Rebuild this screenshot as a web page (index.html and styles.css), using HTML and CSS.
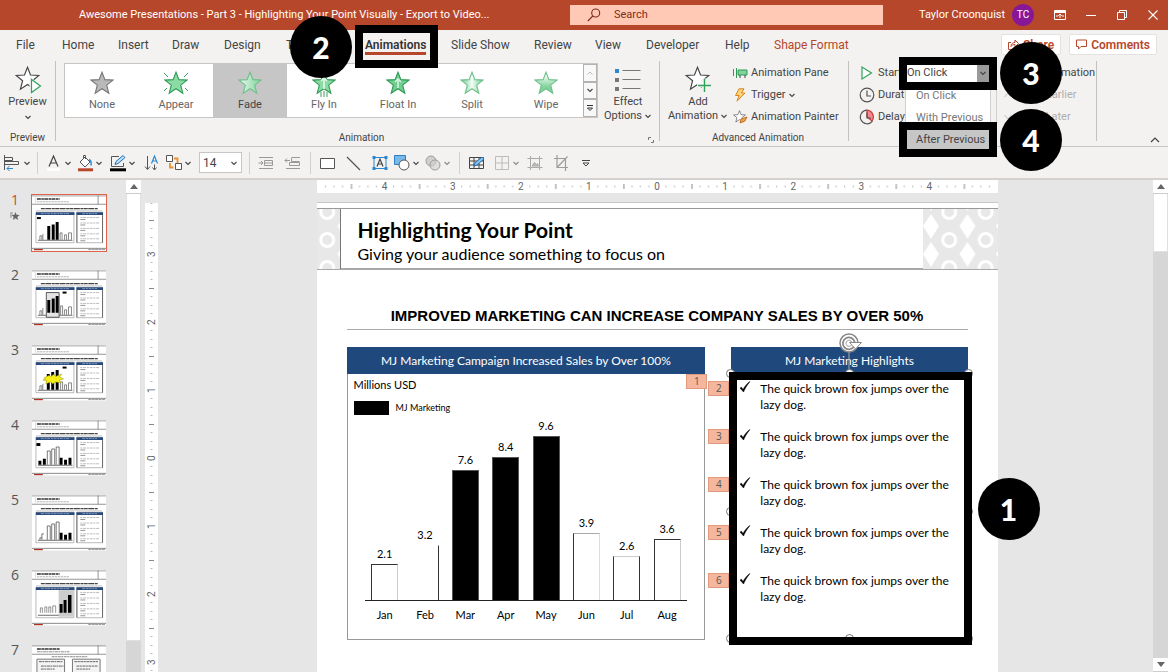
FILE: index.html
```html
<!DOCTYPE html>
<html lang="en">
<head>
<meta charset="utf-8">
<title>Awesome Presentations</title>
<link rel="stylesheet" href="styles.css">
</head>
<body>
<svg class="defs" aria-hidden="true">
  <defs>
    <linearGradient id="fadeFill"><stop offset="0" stop-color="#eafaef"/><stop offset="1" stop-color="#7fd39b"/></linearGradient>
    <linearGradient id="splitFill"><stop offset="0" stop-color="#6fce90"/><stop offset=".5" stop-color="#f4fcf6"/><stop offset="1" stop-color="#6fce90"/></linearGradient>
    <linearGradient id="wipeFill" x2="0" y2="1"><stop offset="0.15" stop-color="#f4fcf6"/><stop offset=".7" stop-color="#7fd39b"/></linearGradient>
    <symbol id="star" viewBox="0 0 24 24"><path d="M12 1.2l2.9 7.4 8 .5-6.2 5 2.1 8.1-6.8-4.5-6.8 4.5 2.1-8.1-6.2-5 8-.5z" stroke-width="1.1"/></symbol>
    <symbol id="chev" viewBox="0 0 8 8"><path d="M1.5 3L4 5.5 6.500 3" fill="none" stroke="#444" stroke-width="1.1"/></symbol>
    <symbol id="slide" viewBox="0 0 75 56">
      <rect width="75" height="56" fill="#fff"/>
      <path d="M0 .5h75" stroke="#999"/><path d="M0 9h75M67 0v9" stroke="#666" stroke-width=".7"/><path d="M3.500 2v6" stroke="#bbb" stroke-width=".5"/>
      <path d="M5 3.700h23" stroke="#333" stroke-width="1.4" stroke-dasharray="4 .5 2.500 .4"/>
      <path d="M5 6.500h33" stroke="#aaa" stroke-width=".9" stroke-dasharray="2 .6 3 .5"/>
      <path d="M9 13.500h58" stroke="#444" stroke-width="1.3" stroke-dasharray="4 .5 6 .6 3 .4"/>
      <path d="M4 15.500h67" stroke="#999" stroke-width=".4"/>
      <path d="M4 17h38.500v31H4zM45.500 17h26v31h-26z" fill="none" stroke="#999" stroke-width=".7"/>
      <path d="M45.500 20v28M71.500 20v28" stroke="#555" stroke-width=".8"/>
      <path d="M4 18.500h39M45 18.500h27" stroke="#27487a" stroke-width="3"/>
      <path d="M9 18.500h29M51 18.500h15" stroke="#a9bbd8" stroke-width=".7" stroke-dasharray="3 .8 2 .6"/>
      <path d="M49 22.500h19M49 28h19M49 33.500h19M49 39h19M49 44h19" stroke="#aaa" stroke-width=".8" stroke-dasharray="2 .8 3 .8"/>
      <path d="M49 24.500h5M49 30h5M49 35.500h5M49 41h5M49 46h5" stroke="#888" stroke-width=".9"/>
      <path d="M6 45.500h35" stroke="#444" stroke-width=".8"/>
      <path d="M0 53.700h75" stroke="#555" stroke-width=".7"/><path d="M2 54.900h9" stroke="#b33020" stroke-width="1.2"/><path d="M57 54.900h17" stroke="#999" stroke-dasharray="3 .5"/>
    </symbol>
    <pattern id="motif" width="36.5" height="28" patternUnits="userSpaceOnUse" patternTransform="translate(8 3)">
      <rect width="37" height="28" fill="#e8e8e8"/>
      <path d="M0 2l8 12-8 13zM36.500 2l-8 12 8 13z" fill="#fff"/>
      <circle cx="18.2" cy="0" r="6.500" fill="none" stroke="#fff" stroke-width="3"/><circle cx="18.2" cy="28" r="6.500" fill="none" stroke="#fff" stroke-width="3"/>
    </pattern>
    <pattern id="motifLeft" width="36.5" height="28" patternUnits="userSpaceOnUse" patternTransform="translate(-8 3)">
      <rect width="37" height="28" fill="#e8e8e8"/>
      <path d="M0 2l8 12-8 13zM36.500 2l-8 12 8 13z" fill="#fff"/>
      <circle cx="18.2" cy="0" r="6.500" fill="none" stroke="#fff" stroke-width="3"/><circle cx="18.2" cy="28" r="6.500" fill="none" stroke="#fff" stroke-width="3"/>
    </pattern>
    <pattern id="ticksH" width="68.1" height="13" patternUnits="userSpaceOnUse">
      <path d="M8.500 5.500v2M17 5.500v2M25.500 5.500v2M42.500 5.500v2M51 5.500v2M59.500 5.500v2" stroke="#bbb"/><path d="M34.500 4v5" stroke="#888"/>
    </pattern>
    <pattern id="ticksV" width="13" height="68" patternUnits="userSpaceOnUse" y="-17">
      <path d="M5.500 8.500h2M5.500 17.500h2M5.500 25.500h2M5.500 42.500h2M5.500 51.500h2M5.500 59.500h2" stroke="#bbb"/><path d="M4 34.500h5" stroke="#888"/>
    </pattern>
  </defs>
</svg>

<header class="titlebar">
  <h1 class="doc-title">Awesome Presentations - Part 3 - Highlighting Your Point Visually - Export to Video...</h1>
  <label class="search">
    <svg width="14" height="14" viewBox="0 0 14 14" fill="none" stroke="#7d2c1a" stroke-width="1.1"><circle cx="8.700" cy="5" r="4"/><path d="M5.800 8L.8 13"/></svg>
    <input type="text" placeholder="Search" aria-label="Search">
  </label>
  <div class="account">
    <span>Taylor Croonquist</span><span class="avatar">TC</span>
  </div>
  <div class="window-buttons">
    <button aria-label="Ribbon display options"><svg width="12" height="10" viewBox="0 0 12 10"><path d="M.5.500h11v9H.500z" fill="none" stroke="#fff"/><path d="M.5 2h11" stroke="#fff" stroke-width="2"/><path d="M6 8V4M4.300 5.700L6 4l1.700 1.700M2 6h2M8 6h2" fill="none" stroke="#fff"/></svg></button>
    <button aria-label="Minimize"><svg width="10" height="10" viewBox="0 0 10 10"><path d="M0 5.500h10" stroke="#fff"/></svg></button>
    <button aria-label="Restore"><svg width="10" height="10" viewBox="0 0 10 10" fill="none" stroke="#fff"><path d="M.5 2.500h7v7h-7zM2.500 2.500v-2h7v7h-2"/></svg></button>
    <button aria-label="Close"><svg width="10" height="10" viewBox="0 0 10 10"><path d="M.5.500l9 9M9.500.500l-9 9" stroke="#fff" stroke-width="1.1"/></svg></button>
  </div>
</header>

<nav class="tabs">
  <div class="tab-list">
    <button>File</button><button>Home</button><button>Insert</button><button>Draw</button><button>Design</button><button>Transitions</button>
    <div class="active-tab"><button>Animations</button><span class="frame frame-tab"></span><span class="step step-2">2</span></div>
    <button>Slide Show</button><button>Review</button><button>View</button><button>Developer</button><button>Help</button><button class="contextual">Shape Format</button>
  </div>
  <div class="tab-actions">
    <button><svg width="11" height="11" viewBox="0 0 11 11" fill="none" stroke="#b7472a"><path d="M3 3.500H.5v7h8V7M3 7.500c0-3 2-4 4-4V1l3.500 3.500L7 8V5.500c-2 0-3 .5-4 2z"/></svg>Share</button>
    <button><svg width="11" height="11" viewBox="0 0 11 11" fill="none" stroke="#b7472a"><path d="M.5 1h10v6.500H5L2.500 10V7.500h-2z"/></svg>Comments</button>
  </div>
</nav>

<section class="ribbon">
  <div class="group group-preview">
    <div class="group-body">
      <button class="big"><svg width="30" height="30" viewBox="0 0 30 30"><use href="#star" x="2" y="1" width="25" height="25" fill="#fff" stroke="#444"/><path d="M18 14.500v14l9.500-7z" fill="#f3f2f1" stroke="#f3f2f1" stroke-width="3"/><path d="M18.500 14.500v13l9-6.500z" fill="#fff" stroke="#2fa35b" stroke-width="1.2"/></svg>
      <span>Preview</span><svg class="chev" width="8" height="8"><use href="#chev"/></svg></button>
    </div>
    <div class="group-label">Preview</div>
  </div>

  <div class="group group-animation">
    <div class="group-body">
      <div class="gallery">
        <button><svg width="26" height="28" viewBox="0 0 26 28"><use href="#star" x="1" y="2" width="24" height="24" fill="#b9b9b9" stroke="#777"/></svg>None</button>
        <button><svg width="26" height="28" viewBox="0 0 26 28"><use href="#star" x="1" y="2" width="24" height="24" fill="#8bdba4" stroke="#2e9a55"/><path d="M1 4l4 4M25 4l-4 4M1 22l3-3M25 22l-3-3" stroke="#3d9d5f"/></svg>Appear</button>
        <button class="selected"><svg width="26" height="28" viewBox="0 0 26 28"><use href="#star" x="1" y="2" width="24" height="24" fill="url(#fadeFill)" stroke="#6fbf8b"/></svg>Fade</button>
        <button><svg width="26" height="28" viewBox="0 0 26 28"><use href="#star" x="1" y="2" width="24" height="24" fill="#8bdba4" stroke="#2e9a55"/><path d="M13 20V9M10 12l3-3 3 3" fill="none" stroke="#e6f8ec" stroke-width="1.600"/><path d="M10 23v5M13 22v6M16 23v5" stroke="#3d9d5f"/></svg>Fly In</button>
        <button><svg width="26" height="28" viewBox="0 0 26 28"><use href="#star" x="1" y="2" width="24" height="24" fill="#6fce90" stroke="#2e9a55"/><path d="M13 19V10M10 13l3-3 3 3" fill="none" stroke="#d3f2dc" stroke-width="1.600"/></svg>Float In</button>
        <button><svg width="26" height="28" viewBox="0 0 26 28"><use href="#star" x="1" y="2" width="24" height="24" fill="url(#splitFill)" stroke="#6fbf8b"/></svg>Split</button>
        <button><svg width="26" height="28" viewBox="0 0 26 28"><use href="#star" x="1" y="2" width="24" height="24" fill="url(#wipeFill)" stroke="#6fbf8b"/></svg>Wipe</button>
        <div class="gallery-scroll">
          <button aria-label="Row up"><svg width="8" height="8" viewBox="0 0 8 8"><path d="M1.500 5.500L4 3l2.500 2.500" fill="none" stroke="#bbb"/></svg></button>
          <button aria-label="Row down"><svg width="8" height="8"><use href="#chev"/></svg></button>
          <button aria-label="More"><svg width="8" height="8" viewBox="0 0 8 8"><path d="M1 1.500h6M1.500 4L4 6.500 6.500 4z" fill="none" stroke="#333"/></svg></button>
        </div>
      </div>
      <button class="big"><svg width="30" height="30" viewBox="0 0 30 30"><path d="M2 4h4v4H2z" fill="#2b88d0"/><path d="M2 13h4v4H2zM2 22h4v4H2z" fill="#777"/><path d="M9.500 5.500h18M9.500 14.500h18M9.500 23.500h18" stroke="#777"/></svg>
      <span>Effect</span><span>Options <svg width="8" height="8"><use href="#chev"/></svg></span></button>
    </div>
    <div class="group-label">Animation<svg class="launcher" width="6" height="6" viewBox="0 0 6 6" fill="none" stroke="#777"><path d="M.5 3V.500H3M5.500 3v2.500H3"/></svg></div>
  </div>

  <div class="group group-advanced">
    <div class="group-body">
      <button class="big"><svg width="30" height="30" viewBox="0 0 30 30"><use href="#star" x="2" y="1" width="25" height="25" fill="#fff" stroke="#444"/><path d="M14 20.500h14M21 13.500v14" stroke="#f3f2f1" stroke-width="4"/><path d="M15 20.500h13M21.500 14v13" stroke="#2fa35b" stroke-width="1.4"/></svg>
      <span>Add</span><span>Animation <svg width="8" height="8"><use href="#chev"/></svg></span></button>
      <div class="rows">
        <button><svg width="15" height="14" viewBox="0 0 15 14"><path d="M5 4h9v5H5zM.5 3v7M3.500 2v10" fill="#7fd39b" stroke="#2e9a55"/><path d="M7 9v3M12 9v3" stroke="#444"/></svg>Animation Pane</button>
        <button><svg width="15" height="14" viewBox="0 0 15 14"><path d="M6 .8h5L8.500 5H12L4 13.200 6 7.500H2.500z" fill="#fbd37a" stroke="#d9851b"/></svg>Trigger<svg width="8" height="8"><use href="#chev"/></svg></button>
        <button><svg width="15" height="14" viewBox="0 0 15 14"><use href="#star" x="0" y="0" width="13" height="13" fill="#fff" stroke="#444" stroke-width="2"/><path d="M8 9l6-2-2 4-5 2z" fill="#f3a14b" stroke="#b95f12" stroke-width=".8"/></svg>Animation Painter</button>
      </div>
    </div>
    <div class="group-label">Advanced Animation</div>
  </div>

  <div class="group group-timing">
    <div class="group-body">
      <div class="timing-fields">
        <svg width="16" height="16" viewBox="0 0 16 16"><path d="M3 2v12l9.500-6z" fill="#fff" stroke="#2fa35b" stroke-width="1.2"/></svg>
        <label for="start">Start:</label>
        <div class="start-field">
          <select id="start"><option>On Click</option></select>
          <span class="select-arrow"><svg width="8" height="8"><use href="#chev"/></svg></span>
          <div class="start-menu"><button>On Click</button><button>With Previous</button><button class="chosen">After Previous</button></div>
          <span class="frame frame-start"></span><span class="frame frame-option"></span>
          <span class="step step-3">3</span><span class="step step-4">4</span>
        </div>
        <svg width="16" height="16" viewBox="0 0 16 16" fill="none" stroke="#555" stroke-width="1.200"><circle cx="8" cy="8" r="6.800"/><path d="M8 3.500V9h4"/></svg>
        <span class="field-name">Duration:</span>
        <svg width="16" height="16" viewBox="0 0 16 16" fill="none" stroke="#555" stroke-width="1.200"><path d="M8 1.200V8l5 4a6.800 6.800 0 0 0-5-10.800z" fill="#f28b90" stroke="#d13438"/><path d="M8 1.200a6.800 6.800 0 1 0 5.500 11"/><path d="M8 3.500V9h4"/></svg>
        <span class="field-name">Delay:</span>
      </div>
      <div class="reorder">
        <span>Reorder Animation</span>
        <button><svg width="8" height="8" viewBox="0 0 8 8"><path d="M.5 6L4 2l3.500 4" fill="none" stroke="#bbb"/></svg>Move Earlier</button>
        <button><svg width="8" height="8" viewBox="0 0 8 8"><path d="M.5 2L4 6l3.500-4" fill="none" stroke="#bbb"/></svg>Move Later</button>
      </div>
    </div>
  </div>
  <button class="collapse" aria-label="Collapse ribbon"><svg width="10" height="8" viewBox="0 0 10 8"><path d="M1 6l4-4 4 4" fill="none" stroke="#444" stroke-width="1.2"/></svg></button>
</section>

<section class="quickbar">
  <button aria-label="Align"><svg width="18" height="18" viewBox="0 0 18 18" fill="none" stroke="#555"><path d="M.5 1v15M.500 3.500h8v3h-8M.500 7.500h14v3H.500"/><path d="M9 14.500H3M5.500 12L3 14.500 5.500 17" stroke="#2b88d0"/></svg><svg width="8" height="8"><use href="#chev"/></svg></button>
  <i></i>
  <button aria-label="Font color"><svg width="18" height="18" viewBox="0 0 18 18"><path d="M4 12.500L8.500 2l4.500 10.500M5.500 9h6" fill="none" stroke="#444" stroke-width="1.200"/><path d="M2 15.500h13" stroke="#fff" stroke-width="2.500"/></svg><svg width="8" height="8"><use href="#chev"/></svg></button>
  <button aria-label="Shape fill"><svg width="18" height="18" viewBox="0 0 18 18"><path d="M4 8l5-5 5 5-5 5zM7.500 5V1.500h2V5" fill="#fff" stroke="#555"/><path d="M13 5.500c2 1 2.500 3 2 6" fill="none" stroke="#2b88d0" stroke-width="1.500"/><path d="M2 15.800h15" stroke="#b7472a" stroke-width="3"/></svg><svg width="8" height="8"><use href="#chev"/></svg></button>
  <button aria-label="Shape outline"><svg width="18" height="18" viewBox="0 0 18 18"><path d="M10 2.500H2.500v10h12V9" fill="none" stroke="#555"/><path d="M6 10.500l1-3L14 1.500l2 2-7 6z" fill="#bfe0f7" stroke="#1f6fb5"/><path d="M1 15.800h16" stroke="#000" stroke-width="3"/></svg><svg width="8" height="8"><use href="#chev"/></svg></button>
  <button aria-label="Text direction"><svg width="18" height="18" viewBox="0 0 18 18" fill="none"><path d="M5.500 2v13M3 12.500L5.500 15.500 8 12.500M12.500 10.500v5M10.500 13.500l2 2.500 2-2.500" stroke="#555"/><path d="M9.500 9.500L12.500 2l3 7.500M10.500 7h4" stroke="#2b88d0" stroke-width="1.200"/></svg></button>
  <button aria-label="Arrange"><svg width="18" height="18" viewBox="0 0 18 18" fill="none"><path d="M9 4.500h3.500V9M8.500 13.500H5V9" stroke="#e8912d" stroke-width="1.800"/><path d="M1.500 1.500h6v6h-6zM10.500 9.500h6v6h-6z" fill="#fff" stroke="#555"/></svg><svg width="8" height="8"><use href="#chev"/></svg></button>
  <div class="font-size"><select aria-label="Font size"><option>14</option></select><svg width="8" height="8"><use href="#chev"/></svg></div>
  <i></i>
  <button aria-label="Increase indent"><svg width="18" height="18" viewBox="0 0 18 18" fill="none" stroke="#999"><path d="M2 3.500h14M2 14.500h14M7.500 6.500h8v5h-8zM7 9h9M1.500 9h4M4 7l2 2-2 2"/></svg></button>
  <button aria-label="Decrease indent"><svg width="18" height="18" viewBox="0 0 18 18" fill="none" stroke="#999"><path d="M8 3.500h8M2 14.500h14M7.500 3.500v4h8M5.500 11.500v-3h10v3zM1 6.500h5M3 4.500l-2 2 2 2"/></svg></button>
  <i></i>
  <button aria-label="Rectangle"><svg width="18" height="18" viewBox="0 0 18 18"><path d="M2.500 4.500h14v10h-14z" fill="#fff" stroke="#555"/></svg></button>
  <button aria-label="Line"><svg width="18" height="18" viewBox="0 0 18 18"><path d="M3 3l13 13" stroke="#555" stroke-width="1.200"/></svg></button>
  <button aria-label="Text box"><svg width="18" height="18" viewBox="0 0 18 18" fill="none"><path d="M3 3.500h12v11H3z" stroke="#2b88d0"/><path d="M1.500 2h3v3h-3zM13.500 2h3v3h-3zM1.500 13h3v3h-3zM13.500 13h3v3h-3z" fill="#2b88d0"/><path d="M6 12.500L9 5l3 7.500M7 10h4" stroke="#444" stroke-width="1.200"/></svg></button>
  <button aria-label="Shapes"><svg width="18" height="18" viewBox="0 0 18 18"><path d="M1.500 1.500h11v9h-11z" fill="#79b9ea" stroke="#2b7fc4"/><circle cx="11" cy="11" r="5" fill="#fff" stroke="#555"/></svg><svg width="8" height="8"><use href="#chev"/></svg></button>
  <button class="off" aria-label="Merge shapes"><svg width="18" height="18" viewBox="0 0 18 18" stroke="#666" fill="#bbb"><circle cx="7" cy="7" r="5"/><circle cx="11" cy="11" r="5" fill="#bbb" fill-opacity=".6"/></svg><svg width="8" height="8"><use href="#chev"/></svg></button>
  <i></i>
  <button aria-label="Draw table"><svg width="18" height="18" viewBox="0 0 18 18" fill="none"><path d="M2.500 3.500h14v11h-14zM2.500 7h14M2.500 11h14M7 3v12M12 3v12" stroke="#444"/><path d="M7 12l1-3 7-6 2 2-7 6z" fill="#8cc6f0" stroke="#1f6fb5"/></svg></button>
  <button class="off" aria-label="Borders"><svg width="18" height="18" viewBox="0 0 18 18" fill="none"><path d="M2.500 2.500h13v13h-13zM9 2.500v13M2.500 9h13" stroke="#999"/></svg><svg width="8" height="8"><use href="#chev"/></svg></button>
  <button class="off" aria-label="Picture"><svg width="18" height="18" viewBox="0 0 18 18" fill="none" stroke="#777"><path d="M4.500 4.500h9v9h-9zM1.500 4.500h3M13.500 4.500h3M1.500 13.500h3M13.500 13.500h3M4.500 2v2M13.500 2v2M4.500 14v2M13.500 14v2"/><path d="M6 12l2.500-3.500 2 2 1-1 1 2.500z" fill="#999"/></svg></button>
  <button class="off" aria-label="Crop"><svg width="18" height="18" viewBox="0 0 18 18" fill="none" stroke="#666" stroke-width="1.200"><path d="M5 1v12.500h11M2 4.500h11.500V17M15.500 2.500L5 13.500"/></svg></button>
  <button aria-label="More"><svg width="10" height="10" viewBox="0 0 10 10" fill="#fff" stroke="#444"><path d="M1 2.500h8M2 5l3 3 3-3z"/></svg></button>
</section>

<main class="workspace">
  <aside class="slides">
    <button class="thumb current"><span class="thumb-no">1<svg width="10" height="10" viewBox="0 0 10 10"><path d="M5.500 1l1.100 2.800 3 .1-2.300 2 .9 3-2.700-1.700-2.600 1.700.8-3L1.500 4l2.900-.2z" fill="#666"/><path d="M0 2h3M0 4h2M0 6h2" stroke="#666" stroke-width=".7"/></svg></span>
      <svg class="mini" viewBox="0 0 75 56"><use href="#slide"/><path d="M5 23h4" stroke="#000" stroke-width="2"/><path d="M15.500 45V31h3v14zM20 45V29.500h3V45zM24 45V27h3v18z" fill="#000"/><path d="M8 45v-4h2v4M11 45v-6M28.500 45v-7h2v7M33 45v-5h2v5M37 45v-7h3v7" fill="none" stroke="#555" stroke-width=".7"/></svg></button>
    <button class="thumb"><span class="thumb-no">2</span>
      <svg class="mini" viewBox="0 0 75 56"><use href="#slide"/><path d="M31 22.500h4" stroke="#000" stroke-width="2"/><path d="M14.500 22.500h13v25h-13z" fill="#e4e4e4" stroke="#333" stroke-width=".8"/><path d="M15.500 43V30h3v13zM20 43V28.500h3V43zM24 43V26h3v17z" fill="#000"/><path d="M8 45v-4h2v4M11 45v-7M29 45v-9h2v9M33 45v-5h2v5M37 45v-8h3v8" fill="none" stroke="#555" stroke-width=".7"/></svg></button>
    <button class="thumb"><span class="thumb-no">3</span>
      <svg class="mini" viewBox="0 0 75 56"><use href="#slide"/><path d="M31 22.500h4" stroke="#000" stroke-width="2"/><path d="M15 45V29h3v16zM19.500 45V27h3v18zM24 45V25h3v20z" fill="#000"/><path d="M8 45v-4h2v4M11 45v-6M29 45v-8h2v8M33 45v-5h2v5M37 45v-7h3v7" fill="none" stroke="#555" stroke-width=".7"/><path d="M12 33l5-2.500 2 1 3-2 2 2 6-2.500-2 3 4 2-4 1 1 3-5-1-3 2-2-2-5 2 1-3-4-1 3-1z" fill="#f6ee16" stroke="#9a9400" stroke-width=".5"/></svg></button>
    <button class="thumb"><span class="thumb-no">4</span>
      <svg class="mini" viewBox="0 0 75 56"><use href="#slide"/><path d="M4.500 23h4v3h-4z"/><path d="M6.500 45v-4h3v4zM11 45v-6h3v6zM28 45v-7h3v7zM32.500 45v-5h3v5zM37 45v-7h3v7z" fill="#000"/><path d="M15.500 45V31h3v14M20 45V29h3v16M24.500 45V27h3v18" fill="none" stroke="#555" stroke-width=".8"/></svg></button>
    <button class="thumb"><span class="thumb-no">5</span>
      <svg class="mini" viewBox="0 0 75 56"><use href="#slide"/><path d="M28 45v-7h3v7zM32.500 45v-5h3v5zM37 45v-7h3v7z" fill="#000"/><path d="M8 45v-2h2M10 45v-6h2M15.500 45V31h3v14M20 45V29h3v16M24.500 45V27h3v18" fill="none" stroke="#555" stroke-width=".8"/></svg></button>
    <button class="thumb"><span class="thumb-no">6</span>
      <svg class="mini" viewBox="0 0 75 56"><use href="#slide"/><path d="M27 20h15v27H27z" fill="#ccc"/><path d="M28 43V34h3v9zM32 43V30h3v13zM36.500 43V25H40v18z" fill="#000"/><path d="M8.500 43v-5h2v5M13 43v-6h2v6M17 43v-6h2v6M21 43v-7h3v7" fill="none" stroke="#666" stroke-width=".7"/></svg></button>
    <button class="thumb"><span class="thumb-no">7</span>
      <svg class="mini" viewBox="0 0 75 56"><path d="M0 0h75v56H0z" fill="#fff"/><path d="M0 .500h75M0 9h75M67 0v9" fill="none" stroke="#666" stroke-width=".7"/><path d="M5 3.700h23" stroke="#333" stroke-width="1.400" stroke-dasharray="4 .5 3 .4"/><path d="M5 6.500h33M20 11.500h36" stroke="#888" stroke-dasharray="3 .5 2 .6"/><path d="M5 14h28v34H5zM41 14h28v34H41z" fill="#f4f4f4" stroke="#777"/><path d="M7 16.500h24M9 21h23M9 24h14M43 16.500h24M45 21h22M45 24h14" stroke="#666" stroke-dasharray="3 .5 2 .6"/></svg></button>
  </aside>
  <div class="scrollbar scroll-left"><button aria-label="Scroll up"><svg width="8" height="5" viewBox="0 0 8 5"><path d="M0 5l4-5 4 5z" fill="#666"/></svg></button><span class="scroll-thumb"></span></div>
  <div class="ruler-v">
    <svg class="ticks" width="100%" height="100%"><rect width="13" height="100%" fill="url(#ticksV)"/></svg>
    <span>3</span><span>2</span><span>1</span><span>0</span><span>1</span><span>2</span><span>3</span>
  </div>
  <div class="canvas">
    <div class="ruler-h">
      <svg class="ticks" width="100%" height="13"><rect width="100%" height="13" fill="url(#ticksH)"/></svg>
      <span>4</span><span>3</span><span>2</span><span>1</span><span>0</span><span>1</span><span>2</span><span>3</span><span>4</span>
    </div>
    <article class="slide">
      <header class="slide-head">
        <svg class="motif-left" width="23" height="60"><rect width="100%" height="60" fill="url(#motifLeft)"/></svg>
        <div class="slide-titles"><h2>Highlighting Your Point</h2><p>Giving your audience something to focus on</p></div>
        <svg width="75" height="60"><rect width="75" height="60" fill="url(#motif)"/></svg>
      </header>
      <div class="slide-body">
        <h3 class="headline">IMPROVED MARKETING CAN INCREASE COMPANY SALES BY OVER 50%</h3>
        <div class="panels">
          <section class="panel chart-panel">
            <h4>MJ Marketing Campaign Increased Sales by Over 100%</h4>
            <span class="tag tag-chart">1</span>
            <div class="units">Millions USD</div>
            <div class="legend"><span class="swatch"></span>MJ Marketing</div>
            <div class="plot">
              <div class="col"><span>2.1</span><div class="bar bar-lt" style="height:36px"></div></div>
              <div class="col"><span>3.2</span><div class="bar bar-r" style="height:55px"></div></div>
              <div class="col"><span>7.6</span><div class="bar solid" style="height:130px"></div></div>
              <div class="col"><span>8.4</span><div class="bar solid" style="height:143px"></div></div>
              <div class="col"><span>9.6</span><div class="bar solid" style="height:164px"></div></div>
              <div class="col"><span>3.9</span><div class="bar bar-l" style="height:67px"></div></div>
              <div class="col"><span>2.6</span><div class="bar bar-lr" style="height:44px"></div></div>
              <div class="col"><span>3.6</span><div class="bar bar-lt" style="height:61px"></div></div>
            </div>
            <div class="months"><span>Jan</span><span>Feb</span><span>Mar</span><span>Apr</span><span>May</span><span>Jun</span><span>Jul</span><span>Aug</span></div>
          </section>
          <section class="panel list-panel">
            <h4>MJ Marketing Highlights</h4>
            <svg class="rotate" width="24" height="40" viewBox="0 0 24 40" fill="none"><path d="M11 18v22" stroke="#aaa"/><circle cx="11" cy="10" r="9" fill="#fff" stroke="#888" stroke-width="1.500"/><path d="M16 13.500a6 6 0 1 1 .8-4" stroke="#888" stroke-width="1.800"/><path d="M11.500 9.500h12l-6 6.500z" fill="#fff" stroke="#888"/><path d="M13.500 12a3 3 0 1 1 .2-3" stroke="#999"/></svg>
            <div class="list-body">
              <span class="handle tl"></span><span class="handle tc"></span><span class="handle tr"></span><span class="handle ml"></span><span class="handle mr"></span><span class="handle bl"></span><span class="handle bc"></span><span class="handle br"></span>
              <ul>
                <li><span class="tag">2</span><svg width="12" height="12" viewBox="0 0 12 12"><path d="M1 7l1.500-.8L4 8.500C6 5 8 2.500 11 .5 8 4 6 7.500 4.500 11z"/></svg>The quick brown fox jumps over the lazy dog.</li>
                <li><span class="tag">3</span><svg width="12" height="12" viewBox="0 0 12 12"><path d="M1 7l1.500-.8L4 8.500C6 5 8 2.500 11 .5 8 4 6 7.500 4.500 11z"/></svg>The quick brown fox jumps over the lazy dog.</li>
                <li><span class="tag">4</span><svg width="12" height="12" viewBox="0 0 12 12"><path d="M1 7l1.500-.8L4 8.500C6 5 8 2.500 11 .5 8 4 6 7.500 4.500 11z"/></svg>The quick brown fox jumps over the lazy dog.</li>
                <li><span class="tag">5</span><svg width="12" height="12" viewBox="0 0 12 12"><path d="M1 7l1.500-.8L4 8.500C6 5 8 2.500 11 .5 8 4 6 7.500 4.500 11z"/></svg>The quick brown fox jumps over the lazy dog.</li>
                <li><span class="tag">6</span><svg width="12" height="12" viewBox="0 0 12 12"><path d="M1 7l1.500-.8L4 8.500C6 5 8 2.500 11 .5 8 4 6 7.500 4.500 11z"/></svg>The quick brown fox jumps over the lazy dog.</li>
              </ul>
              <span class="frame frame-list"></span><span class="step step-1">1</span>
            </div>
          </section>
        </div>
      </div>
    </article>
  </div>
  <div class="scrollbar scroll-right"><button aria-label="Scroll up"><svg width="8" height="5" viewBox="0 0 8 5"><path d="M0 5l4-5 4 5z" fill="#666"/></svg></button><span class="scroll-thumb"></span><button class="down" aria-label="Scroll down"><svg width="8" height="5" viewBox="0 0 8 5"><path d="M0 0l4 5 4-5z" fill="#666"/></svg></button></div>
</main>
</body>
</html>
```

FILE: styles.css
```css
* { box-sizing: border-box; }
body {
  margin: 0;
  height: 100vh;
  overflow: hidden;
  display: flex;
  flex-direction: column;
  background: #f3f2f1;
  color: #444;
  font: 11px/14px Roboto, "Open Sans", sans-serif;
}
button, select, input { font: inherit; color: inherit; border: 0; background: none; padding: 0; margin: 0; }
h1, h2, h3, h4, p, ul { margin: 0; padding: 0; font-weight: 400; }
svg { flex: none; display: block; }
.defs { position: absolute; width: 0; height: 0; }

/* Title bar */
.titlebar {
  flex: none;
  display: flex;
  align-items: center;
  height: 30px;
  background: #b7472a;
  color: #fff;
}
.doc-title { flex: 0 0 570px; padding-left: 79px; font-size: 11px; white-space: nowrap; }
.search {
  flex: 1 1 313px;
  display: flex;
  align-items: center;
  gap: 13px;
  height: 20px;
  padding-left: 17px;
  background: #ffc9b5;
}
.search input { flex: 1; min-width: 0; outline: 0; }
.search input::placeholder { color: #7d2c1a; opacity: 1; }
.account { flex: none; width: 151px; padding-left: 36px; display: flex; align-items: center; justify-content: space-between; white-space: nowrap; }
.avatar { width: 22px; height: 22px; border-radius: 50%; background: #881798; font-size: 10px; line-height: 22px; text-align: center; }
.window-buttons { flex: none; display: flex; width: 134px; padding-left: 11px; }
.window-buttons button { flex: 1; display: flex; justify-content: center; }

/* Tab strip */
.tabs { flex: none; display: flex; justify-content: space-between; height: 31px; padding: 0 11px 0 16px; font-size: 12px; }
.tab-list {
  display: grid;
  grid-template-columns: 46px 56px 54px 52px 62px 79px 86px 83px 61px 51px 79px 49px auto;
  align-items: center;
  height: 29px;
}
.tab-list button { text-align: left; white-space: nowrap; }
.tab-list .contextual { color: #b7472a; }
.active-tab { position: relative; }
.active-tab button { color: #333; font-weight: 600; box-shadow: 0 3px 0 #b7472a; }
.tab-actions { display: flex; gap: 8px; padding-top: 4px; }
.tab-actions button {
  display: flex;
  align-items: center;
  gap: 4px;
  height: 21px;
  padding: 0 6px;
  background: #fff;
  border: 1px solid #e4e2e0;
  border-radius: 2px;
  color: #b7472a;
  font-size: 12px;
  font-weight: 600;
}

/* Callouts */
.frame { position: absolute; border: 8px solid #000; z-index: 3; pointer-events: none; }
.step {
  position: absolute;
  z-index: 4;
  width: 62px;
  height: 62px;
  border-radius: 50%;
  background: #000;
  color: #fff;
  font: 900 30px/62px Lato, sans-serif;
  text-align: center;
}
.frame-tab { left: -10px; top: -13px; width: 83px; height: 43px; }
.step-2 { left: -75px; top: -22px; }
.frame-start { left: -8px; top: -7px; width: 98px; height: 33px; }
.frame-option { left: -8px; top: 58px; width: 98px; height: 35px; }
.step-3 { left: 93px; top: -22px; }
.step-4 { left: 93px; top: 45px; }
.frame-list { left: -2px; top: -2px; width: calc(100% + 6px); height: calc(100% + 8px); }
.step-1 { left: calc(100% + 10px); top: 104px; }

/* Ribbon */
.ribbon { flex: none; display: flex; height: 86px; border-bottom: 1px solid #c8c6c4; }
.group { display: flex; flex-direction: column; border-right: 1px solid #c4c2c0; margin-bottom: 5px; }
.group-body { flex: none; display: flex; height: 68px; padding-top: 1px; }
.group-label { flex: none; position: relative; text-align: center; font-size: 10px; line-height: 17px; white-space: nowrap; }
.group-preview { flex: 0 0 56px; }
.group-animation { flex: 0 0 604px; padding-left: 8px; }
.group-advanced { flex: 0 0 189px; padding-left: 8px; }
.group-timing { flex: 0 0 248px; padding-left: 10px; }
.launcher { position: absolute; right: 5px; bottom: 3px; }
.big { display: flex; flex-direction: column; align-items: center; width: 60px; padding-top: 3px; white-space: nowrap; }
.group-preview .big { width: 55px; }
.big svg.chev { margin-top: 4px; }
.big span { display: flex; align-items: center; gap: 2px; }
.gallery {
  display: grid;
  grid-template-columns: repeat(7, 1fr) 14px;
  width: 534px;
  height: 55px;
  margin-top: 1px;
  background: #fff;
  border: 1px solid #c8c6c4;
}
.gallery > button { display: flex; flex-direction: column; align-items: center; gap: 1px; padding-top: 5px; color: #666; }
.gallery > .selected { background: #c6c6c6; color: #444; }
.gallery-scroll { display: grid; grid-template-rows: repeat(3, 1fr); }
.gallery-scroll button { display: flex; align-items: center; justify-content: center; border: 1px solid #b5b3b1; background: #f8f8f8; }
.rows { display: grid; grid-template-rows: repeat(3, 22px); margin-left: 5px; }
.rows button { display: flex; align-items: center; gap: 3px; white-space: nowrap; }
.timing-fields {
  display: grid;
  grid-template-columns: 16px 26px 82px;
  grid-template-rows: repeat(3, 22px);
  align-items: center;
  column-gap: 3px;
  width: 138px;
  border-right: 1px solid #d2d0ce;
}
.timing-fields > svg { grid-column: 1; }
.field-name { white-space: nowrap; }
.start-field { position: relative; width: 82px; height: 18px; display: flex; background: #fff; z-index: 2; }
.start-field select { flex: 1; appearance: none; background: #fff; color: #444; }
.select-arrow { width: 12px; display: flex; align-items: center; justify-content: center; background: #9a9a9a; }
.start-menu { position: absolute; left: -2px; top: 20px; width: 86px; background: #fff; border: 1px solid #d2d0ce; }
.start-menu button { display: block; width: 100%; height: 22px; padding-left: 10px; text-align: left; color: #777; white-space: nowrap; }
.start-menu .chosen { background: #c6c6c6; color: #444; }
.reorder { display: grid; grid-template-rows: repeat(3, 22px); align-items: center; padding-left: 7px; white-space: nowrap; }
.reorder button { display: flex; align-items: center; gap: 4px; color: #b0aeac; }
.collapse { margin: auto 8px 2px auto; }

/* Quick access bar */
.quickbar {
  flex: none;
  display: grid;
  grid-template-columns: 33px 8px 31px 33px 33px 23px 34px 50px 8px 27px 26px 8px 26px 27px 22px 31px 35px 8px 26px 33px 26px 29px auto;
  align-items: center;
  height: 33px;
  padding-left: 4px;
  border-bottom: 2px solid #d4d2d0;
}
.quickbar button { display: flex; align-items: center; gap: 1px; }
.quickbar i { width: 1px; height: 22px; background: #d2d0ce; }
.quickbar .off { opacity: .6; }
.font-size { display: flex; align-items: center; width: 43px; height: 21px; padding: 0 3px; background: #fff; border: 1px solid #c8c6c4; }
.font-size select { flex: 1; appearance: none; font-size: 12px; }

/* Workspace */
.workspace { flex: 1; min-height: 0; display: flex; background: #e6e6e6; overflow: hidden; }
.slides { flex: none; width: 126px; padding: 14px 0 0 8px; display: flex; flex-direction: column; gap: 17px; }
.thumb { flex: none; display: flex; align-items: flex-start; gap: 9px; text-align: left; }
.thumb-no { width: 14px; display: flex; flex-direction: column; align-items: center; gap: 5px; font: 14px/12px "Open Sans", sans-serif; color: #555; }
.mini { width: 76px; height: 58px; border: 1px solid transparent; }
.current .mini { border-color: #e0634a; }
.current .thumb-no { color: #d2472f; }
.scrollbar { flex: none; width: 15px; display: flex; flex-direction: column; background: #d6d6d6; }
.scrollbar button { flex: none; display: flex; align-items: center; justify-content: center; height: 14px; background: #fff; border-bottom: 1px solid #ccc; }
.scroll-thumb { background: #fff; border: 1px solid #e0e0e0; border-top: 0; }
.scroll-left .scroll-thumb { height: 447px; }
.scroll-right .scroll-thumb { height: 58px; }
.scrollbar .down { margin-top: auto; }
.ruler-v { position: relative; flex: none; width: 13px; margin: 23px 0 0 4px; padding-top: 17px; background: #fff; overflow: hidden; color: #666; font-size: 10px; }
.ruler-v span { position: relative; display: flex; align-items: center; justify-content: center; height: 68px; writing-mode: vertical-rl; rotate: 180deg; line-height: 13px; }
.ticks { position: absolute; left: 0; top: 0; }
.canvas { flex: 1; min-width: 0; display: flex; flex-direction: column; align-items: center; padding-left: 3px; }
.ruler-h { position: relative; flex: none; display: flex; justify-content: center; width: 100%; max-width: 681px; background: #fff; color: #666; font-size: 10px; line-height: 13px; }
.ruler-h span { position: relative; flex: 0 0 10%; text-align: center; }

/* Slide */
.slide {
  flex: 1;
  width: 100%;
  max-width: 681px;
  margin-top: 9px;
  padding-top: 5px;
  background: #fff;
  border-top: 1px solid #c8c8c8;
  color: #000;
  font-family: Lato, sans-serif;
}
.slide-head { display: flex; justify-content: space-between; height: 62px; border-top: 1px solid #999; border-bottom: 2px solid #a8a8a8; }
.motif-left { border-right: 1px solid #777; box-sizing: content-box; }
.slide-titles { flex: 1; padding: 8px 0 0 17px; }
.slide-titles h2 { font-size: 21px; line-height: 26px; font-weight: 700; }
.slide-titles p { font-size: 16px; line-height: 22px; }
.slide-body { padding: 35px 30px 0; }
.headline { padding-bottom: 2px; border-bottom: 1px solid #aaa; font: 700 15px/22px "Liberation Sans", Arial, sans-serif; text-align: center; white-space: nowrap; }
.panels { display: flex; gap: 26px; margin-top: 17px; }
.panel { position: relative; }
.panel h4 { height: 27px; background: #1f497d; color: #fff; font-size: 12px; line-height: 27px; text-align: center; }
.chart-panel { flex: 358 1 0; border: 1px solid #999; border-top: 0; }
.chart-panel h4 { margin: 0 -1px; }
.list-panel { flex: 237 1 0; }
.tag { position: absolute; width: 21px; height: 15px; background: #f4b69c; border: 1px solid #e39a7c; color: #555; font: 10px/13px "Open Sans", sans-serif; text-align: center; }
.tag-chart { right: -3px; top: 27px; }
.units { padding: 4px 6px 0; font-size: 11px; line-height: 14px; }
.legend { display: flex; align-items: center; gap: 7px; padding: 9px 6px 0; font-size: 9px; line-height: 14px; }
.swatch { width: 35px; height: 14px; background: #000; }
.plot { display: flex; align-items: flex-end; height: 186px; margin: 0 17px; border-bottom: 1px solid #222; font-size: 11px; }
.col { flex: 1; display: flex; flex-direction: column; align-items: center; gap: 3px; }
.bar { width: 27px; border: 1px solid transparent; border-bottom: 0; }
.solid { background: #000; border-color: #555; }
.bar-lt { border-color: #333 #ccc #333 #333; }
.bar-r { border-right-color: #333; }
.bar-l { border-color: #aaa #ddd #aaa #333; }
.bar-lr { border-color: #ccc #333; }
.months { display: flex; margin: 0 17px; padding: 7px 0 17px; font-size: 11px; line-height: 14px; text-align: center; }
.months span { flex: 1; }
.list-body { position: relative; height: 265px; }
.list-body ul { position: relative; z-index: 1; list-style: none; padding-top: 7px; }
.list-body li { position: relative; height: 48px; padding: 0 8px 0 29px; font-size: 12px; line-height: 16px; }
.list-body li > svg { position: absolute; left: 8px; top: 0; stroke: #000; stroke-width: .5px; }
.list-body .tag { left: -23px; top: 0; }
.rotate { position: absolute; left: calc(50% - 11px); top: -14px; }
.handle { position: absolute; z-index: 2; width: 9px; height: 9px; border: 1px solid #777; border-radius: 50%; background: #fff; }
.tl { left: -5px; top: -5px; } .tc { left: calc(50% - 4px); top: -5px; } .tr { right: -5px; top: -5px; }
.ml { left: -5px; top: 50%; } .mr { right: -5px; top: 50%; }
.bl { left: -5px; bottom: -4px; } .bc { left: calc(50% - 4px); bottom: -4px; } .br { right: -5px; bottom: -4px; }
```
